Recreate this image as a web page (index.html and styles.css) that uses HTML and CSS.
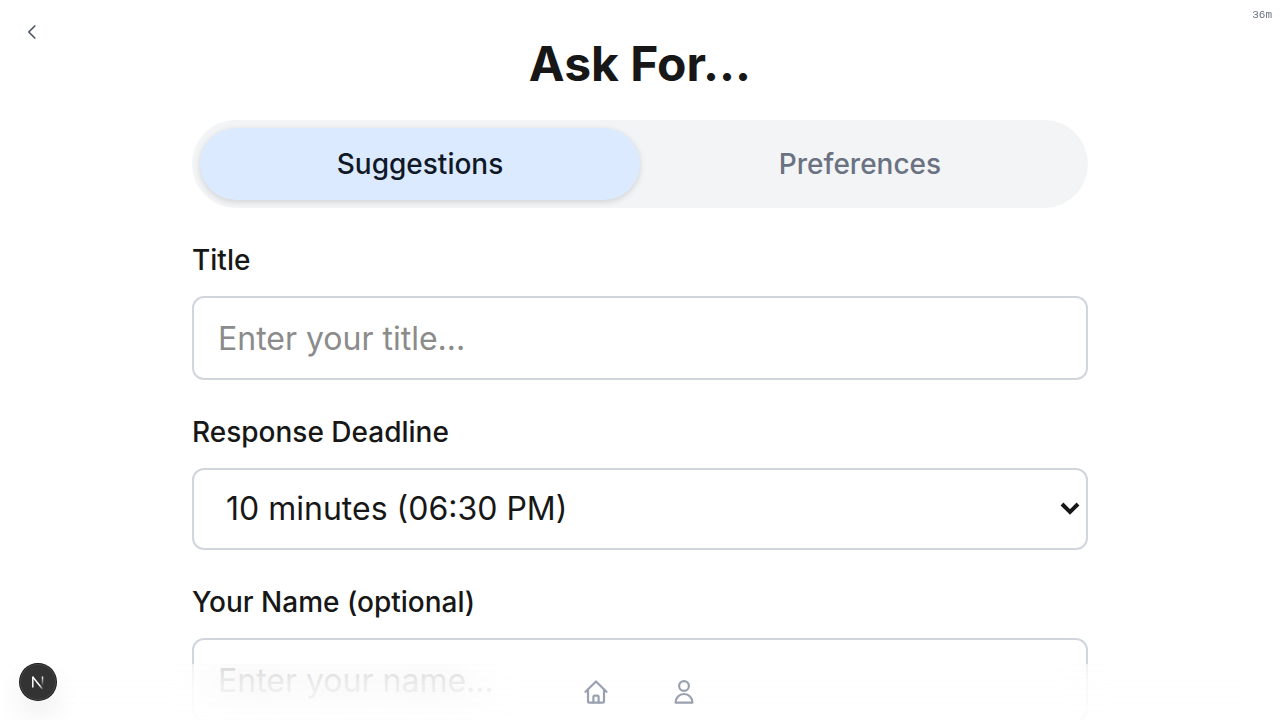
FILE: index.html
```html
<!DOCTYPE html>
<html lang="en">
<head>
<meta charset="utf-8">
<meta name="viewport" content="width=device-width, initial-scale=1">
<title>Ask For...</title>
<link rel="stylesheet" href="styles.css">
</head>
<body>
<button class="back" type="button" aria-label="Back">
  <svg width="24" height="24" viewBox="0 0 24 24" fill="none" stroke="currentColor" stroke-width="1.7" stroke-linecap="round" stroke-linejoin="round"><path d="M14.800 6 8.800 12l6 6"/></svg>
</button>
<span class="timer">36m</span>
<main class="page">
  <h1 class="heading">Ask For...</h1>
  <div class="tabs">
    <button class="tab tab-active" type="button">Suggestions</button>
    <button class="tab" type="button">Preferences</button>
  </div>
  <form class="form">
    <div class="field">
      <label class="label" for="title">Title</label>
      <input class="control" id="title" type="text" placeholder="Enter your title...">
    </div>
    <div class="field">
      <label class="label" for="deadline">Response Deadline</label>
      <div class="select-wrap">
        <select class="control select" id="deadline"><option>10 minutes (06:30 PM)</option></select>
        <svg class="chevron" width="20" height="14" viewBox="0 0 20 14" fill="none" stroke="currentColor" stroke-width="4"><path d="m2 3 8 8 8-8"/></svg>
      </div>
    </div>
    <div class="field">
      <label class="label" for="name">Your Name (optional)</label>
      <input class="control" id="name" type="text" placeholder="Enter your name...">
    </div>
  </form>
</main>
<nav class="nav">
  <a class="nav-link" href="#home" aria-label="Home">
    <svg width="24" height="24" viewBox="0 0 24 24" fill="none" stroke="currentColor" stroke-width="2.200" stroke-linecap="round" stroke-linejoin="round"><path d="M1.500 11.800 12 1.500l10.500 10.300"/><path d="M4 10v11.500q0 1.200 1.200 1.200h13.600q1.200 0 1.200-1.200V10"/><path d="M9.400 22.500V17q0-1.400 1.400-1.400h2.400q1.400 0 1.400 1.400v5.500"/></svg>
  </a>
  <a class="nav-link" href="#profile" aria-label="Profile">
    <svg width="24" height="24" viewBox="0 0 24 24" fill="none" stroke="currentColor" stroke-width="2.200" stroke-linejoin="round"><circle cx="12" cy="6" r="4.900"/><path d="M3.600 22.700c0-5.200 3.500-8.700 8.400-8.700s8.400 3.500 8.400 8.700Z"/></svg>
  </a>
</nav>
<button class="badge" type="button" aria-label="Open developer tools">
  <svg width="36" height="36" viewBox="0 0 36 36" fill="none">
    <defs>
      <linearGradient id="diag" x1="18" y1="18" x2="24" y2="25" gradientUnits="userSpaceOnUse"><stop offset=".4" stop-color="#fff"/><stop offset="1" stop-color="#fff" stop-opacity="0"/></linearGradient>
      <linearGradient id="stem" x1="0" y1="12" x2="0" y2="22" gradientUnits="userSpaceOnUse"><stop stop-color="#fff"/><stop offset="1" stop-color="#fff" stop-opacity="0"/></linearGradient>
    </defs>
    <path d="M12.800 13 22.500 25" stroke="url(#diag)" stroke-width="1.500"/>
    <path d="M12.800 23.500V12.500" stroke="#fff" stroke-width="1.500"/>
    <path d="M22.500 12.500v9.500" stroke="url(#stem)" stroke-width="1.500"/>
  </svg>
</button>
</body>
</html>
```
FILE: styles.css
```css
* { box-sizing: border-box; }
body {
  margin: 0;
  height: 100vh;
  overflow: hidden;
  background: #fff;
  color: #171717;
  font-family: Inter, "Liberation Sans", sans-serif;
}
button { border: 0; background: none; padding: 0; font: inherit; cursor: pointer; }
svg { display: block; }
.back { position: fixed; top: 20px; left: 20px; color: #4b5563; }
.timer {
  position: fixed;
  top: 8px;
  right: 8px;
  color: #6b7280;
  font: 11px/14px "Liberation Mono", monospace;
}
.page { width: 70%; margin: 0 auto; padding: 32px 0 64px; }
.heading {
  margin: 0 0 24px;
  text-align: center;
  font-size: 48px;
  line-height: 64px;
  font-weight: 700;
}
.tabs { display: flex; padding: 8px; border-radius: 44px; background: #f3f4f6; }
.tab {
  flex: 1;
  height: 72px;
  border-radius: 36px;
  color: #6a7282;
  font-size: 28px;
  font-weight: 500;
}
.tab-active { background: #dbeafe; color: #101828; box-shadow: 0 2px 6px rgba(0, 0, 0, .14); }
.form { display: flex; flex-direction: column; gap: 32px; padding-top: 32px; }
.field { display: flex; flex-direction: column; gap: 16px; }
.label { font-size: 28px; line-height: 40px; font-weight: 500; }
.control {
  width: 100%;
  height: 84px;
  padding: 0 24px;
  border: 2px solid #d1d5dc;
  border-radius: 12px;
  background: #fff;
  color: #171717;
  font: 400 32px/48px Inter, "Liberation Sans", sans-serif;
}
.control::placeholder { color: #8b8b8b; opacity: 1; }
.select-wrap { position: relative; }
.select { display: block; height: 82px; padding: 0 32px; appearance: none; }
.chevron { position: absolute; right: 8px; top: 33px; pointer-events: none; }
.nav {
  position: fixed;
  inset: auto 0 0;
  display: flex;
  justify-content: center;
  gap: 64px;
  padding: 16px;
  color: #99a1af;
  background: linear-gradient(rgba(255, 255, 255, .5), rgba(255, 255, 255, .9));
}
.nav::before {
  content: "";
  position: absolute;
  inset: 0;
  z-index: -1;
  backdrop-filter: blur(16px);
  opacity: .7;
}
.nav-link { color: inherit; }
.badge {
  position: fixed;
  left: 20px;
  bottom: 20px;
  border-radius: 50%;
  background: #333;
  box-shadow: inset 0 0 0 1px #444, 0 0 0 1px #171717, 0 16px 32px -8px rgba(0, 0, 0, .24);
}
```
